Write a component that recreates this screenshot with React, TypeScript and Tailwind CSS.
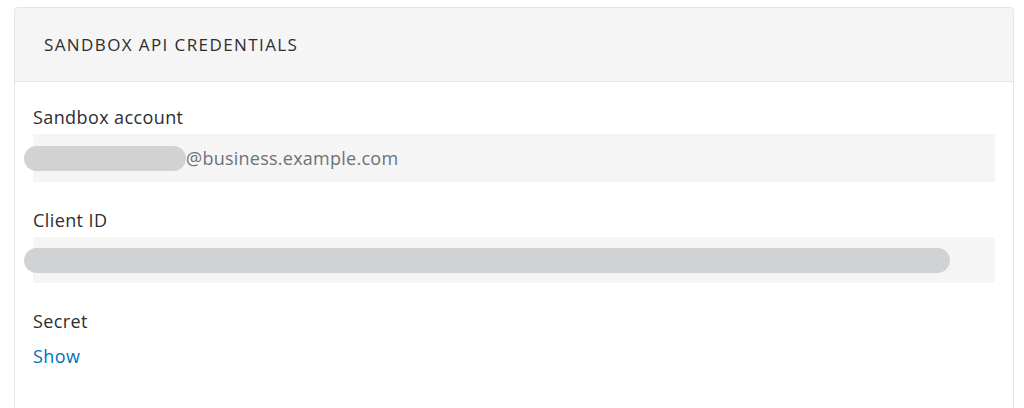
import React from "react";

export default function App() {
  return (
    <div className="w-[1024px] h-[408px] bg-white overflow-hidden" style={{ fontFamily: '"Open Sans", "Noto Sans", sans-serif' }}>
      <div className="ml-[14px] mt-[7px] w-[1000px] h-[420px] border border-[#e5e5e5] rounded-t-[4px] bg-white">
        <div className="h-[74px] bg-[#f5f5f5] border-b border-[#e5e5e5] rounded-t-[4px] flex items-center pl-[29px]">
          <span className="text-[17px] text-[#2c2e2f] tracking-[1.4px]">SANDBOX API CREDENTIALS</span>
        </div>
        <div className="px-[18px] pt-[23px]">
          <div className="text-[18px] leading-[24px] text-[#2c2e2f] tracking-[0.4px]">Sandbox account</div>
          <div className="mt-[5px] h-[48px] bg-[#f5f5f5] flex items-center">
            <div className="-ml-[9px] w-[162px] h-[25px] rounded-full bg-[#d1d2d4]" />
            <span className="text-[18px] text-[#6c7378] tracking-[0.25px]">@business.example.com</span>
          </div>
          <div className="mt-[26px] text-[18px] leading-[24px] text-[#2c2e2f] tracking-[0.4px]">Client ID</div>
          <div className="mt-[5px] h-[46px] bg-[#f5f5f5] flex items-center">
            <div className="-ml-[9px] w-[926px] h-[25px] rounded-full bg-[#d1d2d4]" />
          </div>
          <div className="mt-[26px] text-[18px] leading-[24px] text-[#2c2e2f] tracking-[0.4px]">Secret</div>
          <div className="mt-[11px] text-[18px] leading-[24px] text-[#0070ba] tracking-[0.4px]">Show</div>
        </div>
      </div>
    </div>
  );
}
